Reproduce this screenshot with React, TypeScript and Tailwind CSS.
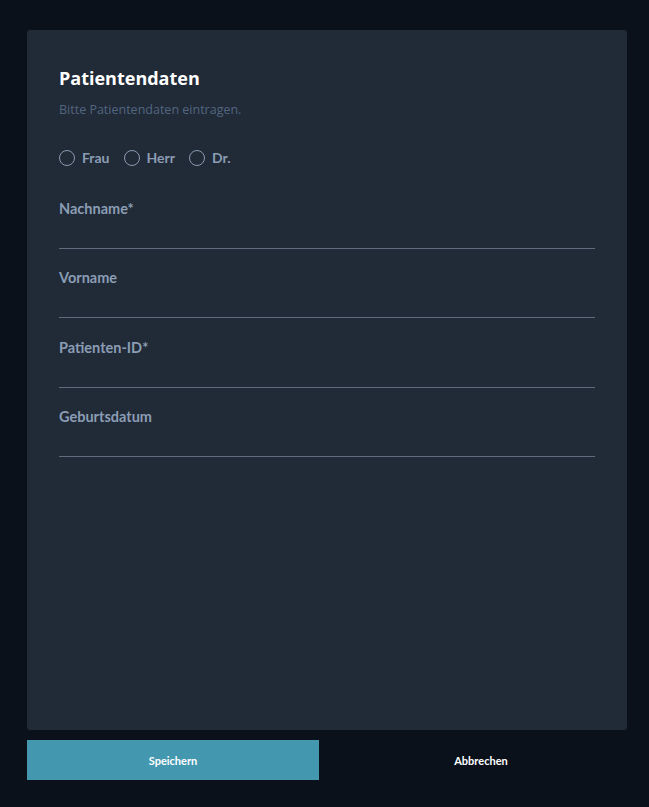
import { useState } from 'react';

const fields = ['Nachname*', 'Vorname', 'Patienten-ID*', 'Geburtsdatum'];
const salutations = ['Frau', 'Herr', 'Dr.'];

function Radio({ label, checked, onSelect }: { label: string; checked: boolean; onSelect: () => void }) {
    return (
        <label className="flex items-center cursor-pointer" onClick={onSelect}>
            <span className="w-4 h-4 rounded-full border border-[#8a9ab0] flex items-center justify-center">
                {checked && <span className="w-2 h-2 rounded-full bg-[#8a9ab0]" />}
            </span>
            <span className="ml-[7px] text-[14px] font-bold leading-4 text-[#8b9db4]">{label}</span>
        </label>
    );
}

export default function App() {
    const [salutation, setSalutation] = useState('');

    return (
        <div className="min-h-[807px] bg-[#0a111b] px-[27px] pt-[30px] pb-[27px] font-['Lato',sans-serif]">
            <div className="w-[600px]">
                <div className="h-[700px] rounded-[3px] bg-[#212a37] px-[32px] pt-9">
                    <h1 className="font-['Open_Sans',sans-serif] text-[18px] leading-6 font-bold text-white">Patientendaten</h1>
                    <p className="mt-[11px] font-['Open_Sans',sans-serif] text-[12.5px] leading-[18px] text-[#52667f]">
                        Bitte Patientendaten eintragen.
                    </p>
                    <div className="mt-[31px] flex gap-[14px]">
                        {salutations.map((s) => (
                            <Radio key={s} label={s} checked={salutation === s} onSelect={() => setSalutation(s)} />
                        ))}
                    </div>
                    <div className="mt-[34px] flex flex-col gap-[20.4px]">
                        {fields.map((field) => (
                            <div key={field} className="flex flex-col">
                                <label className="text-[14.5px] leading-[18px] font-bold text-[#8b9db4]">{field}</label>
                                <input
                                    type="text"
                                    className="h-[31px] bg-transparent border-b border-[#5d6b7d] text-white text-sm outline-none"
                                />
                            </div>
                        ))}
                    </div>
                </div>
                <div className="mt-[10px] flex gap-4">
                    <button className="flex-1 h-10 pt-[2px] bg-[#4398b0] text-white text-[11px] font-bold">Speichern</button>
                    <button className="flex-1 h-10 pt-[2px] text-white text-[11px] font-bold">Abbrechen</button>
                </div>
            </div>
        </div>
    );
}
